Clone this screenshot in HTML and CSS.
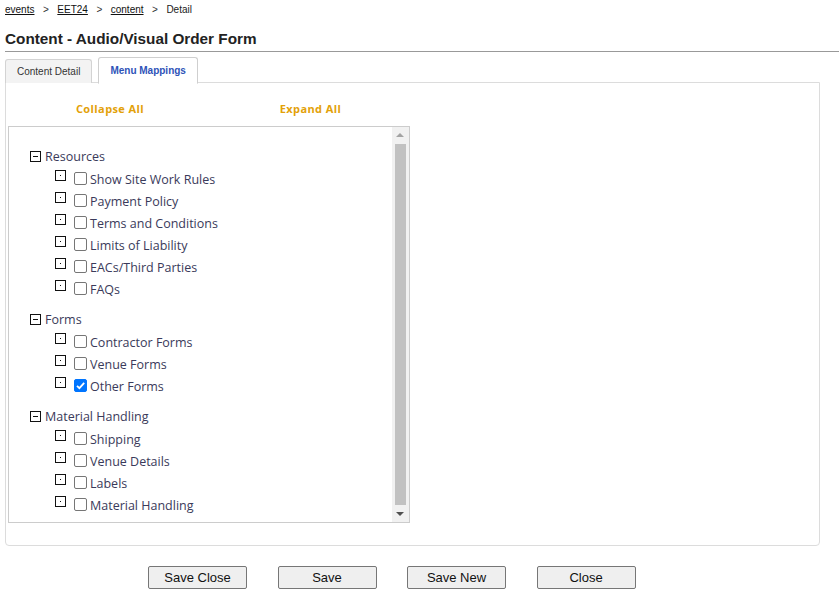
FILE: index.html
```html
<!DOCTYPE html>
<html>
<head>
<meta charset="utf-8">
<title>Content - Audio/Visual Order Form</title>
<link rel="stylesheet" href="styles.css">
</head>
<body>
<div class="crumbs">
  <a href="#">events</a><span class="sep">&gt;</span><a href="#">EET24</a><span class="sep">&gt;</span><a href="#">content</a><span class="sep">&gt;</span><span class="here">Detail</span>
</div>
<h1 class="title">Content - Audio/Visual Order Form</h1>

<div class="tabs">
  <div class="tab">Content Detail</div>
  <div class="tab active">Menu Mappings</div>
</div>

<div class="panel">
  <div class="toggles">
    <a href="#" class="toggle">Collapse All</a>
    <a href="#" class="toggle">Expand All</a>
  </div>
  <div class="treebox">
    <ul class="tree">
      <li class="root">
        <div class="row rootrow"><span class="exp minus"></span><span class="label">Resources</span></div>
        <ul class="kids">
          <li class="row"><span class="exp dot"></span><span class="cb"></span><span class="label">Show Site Work Rules</span></li>
          <li class="row"><span class="exp dot"></span><span class="cb"></span><span class="label">Payment Policy</span></li>
          <li class="row"><span class="exp dot"></span><span class="cb"></span><span class="label">Terms and Conditions</span></li>
          <li class="row"><span class="exp dot"></span><span class="cb"></span><span class="label">Limits of Liability</span></li>
          <li class="row"><span class="exp dot"></span><span class="cb"></span><span class="label">EACs/Third Parties</span></li>
          <li class="row"><span class="exp dot"></span><span class="cb"></span><span class="label">FAQs</span></li>
        </ul>
      </li>
      <li class="root">
        <div class="row rootrow"><span class="exp minus"></span><span class="label">Forms</span></div>
        <ul class="kids">
          <li class="row"><span class="exp dot"></span><span class="cb"></span><span class="label">Contractor Forms</span></li>
          <li class="row"><span class="exp dot"></span><span class="cb"></span><span class="label">Venue Forms</span></li>
          <li class="row"><span class="exp dot"></span><span class="cb on"><svg viewBox="0 0 13 13" width="13" height="13"><path d="M3 6.8 L5.4 9.2 L10.2 3.8" fill="none" stroke="#fff" stroke-width="1.8"/></svg></span><span class="label">Other Forms</span></li>
        </ul>
      </li>
      <li class="root">
        <div class="row rootrow"><span class="exp minus"></span><span class="label">Material Handling</span></div>
        <ul class="kids">
          <li class="row"><span class="exp dot"></span><span class="cb"></span><span class="label">Shipping</span></li>
          <li class="row"><span class="exp dot"></span><span class="cb"></span><span class="label">Venue Details</span></li>
          <li class="row"><span class="exp dot"></span><span class="cb"></span><span class="label">Labels</span></li>
          <li class="row"><span class="exp dot"></span><span class="cb"></span><span class="label">Material Handling</span></li>
        </ul>
      </li>
    </ul>
    <div class="vscroll">
      <div class="arrow up"></div>
      <div class="thumb"></div>
      <div class="arrow down"></div>
    </div>
  </div>
</div>

<div class="actions">
  <button class="btn">Save Close</button>
  <button class="btn">Save</button>
  <button class="btn">Save New</button>
  <button class="btn">Close</button>
</div>
</body>
</html>
```

FILE: styles.css
```css
html, body {
  margin: 0;
  padding: 0;
  background: #fff;
}
body {
  width: 839px;
  height: 593px;
  overflow: hidden;
  font-family: "Liberation Sans", Arial, sans-serif;
  color: #222;
}

/* breadcrumb trail */
.crumbs {
  font-size: 10px;
  line-height: 12px;
  padding: 4px 0 0 5px;
  height: 16px;
  box-sizing: border-box;
}
.crumbs a {
  color: #111;
  text-decoration: underline;
}
.crumbs .sep {
  margin: 0 8.5px;
  color: #333;
}
.crumbs .here {
  color: #222;
}

.title {
  margin: 0 0 0 5px;
  padding: 14px 0 4px 0;
  font-size: 15.3px;
  line-height: 17px;
  font-weight: bold;
  color: #222;
  border-bottom: 1px solid #999;
}

/* tab strip */
.tabs {
  display: flex;
  align-items: flex-end;
  gap: 6px;
  padding: 4px 0 0 5px;
  height: 31px;
  box-sizing: border-box;
  position: relative;
  z-index: 1;
}
.tab {
  height: 24px;
  padding: 0 11px;
  line-height: 23px;
  font-size: 10px;
  color: #333;
  background: #f3f3f3;
  border: 1px solid #d3d3d3;
  border-bottom: none;
  border-radius: 3px 3px 0 0;
  box-sizing: border-box;
}
.tab.active {
  height: 27px;
  line-height: 26px;
  background: #fff;
  color: #2e53b8;
  font-weight: bold;
  padding: 0 11px;
  border-color: #cfcfcf;
  margin-bottom: -1px;
  border-bottom: 1px solid #fff;
}

.panel {
  margin: -1px 0 0 5px;
  width: 815px;
  height: 464px;
  box-sizing: border-box;
  border: 1px solid #dcdcdc;
  border-radius: 0 0 4px 4px;
  padding: 17px 0 0 2px;
}

.toggles {
  display: grid;
  grid-template-columns: 202px 199px;
  height: 26px;
  margin-left: 1px;
}
.toggle {
  text-align: center;
  font-family: "Open Sans", sans-serif;
  font-size: 11px;
  letter-spacing: 0.4px;
  font-weight: bold;
  color: #e3a109;
  text-decoration: none;
  line-height: 17px;
}

/* tree list with its scroll track */
.treebox {
  display: flex;
  width: 402px;
  height: 397px;
  box-sizing: border-box;
  border: 1px solid #cccccc;
}
.tree {
  flex: 1;
  list-style: none;
  margin: 0;
  padding: 17px 0 0 21px;
  font-family: "Open Sans", sans-serif;
  font-size: 12.5px;
  color: #3a3a5a;
}
.tree ul {
  list-style: none;
  margin: 0;
  padding: 0 0 0 25px;
}
.root + .root {
  margin-top: 7px;
}
.row {
  display: flex;
  align-items: center;
  height: 22px;
}
.rootrow {
  height: 24px;
}
.exp {
  width: 11px;
  height: 11px;
  box-sizing: border-box;
  border: 1px solid #111;
  position: relative;
  flex: none;
}
.exp.minus::after {
  content: "";
  position: absolute;
  left: 2px;
  top: 4px;
  width: 5px;
  height: 1px;
  background: #111;
}
.exp.dot {
  margin-top: -7px;
}
.exp.dot::after {
  content: "";
  position: absolute;
  left: 4px;
  top: 4px;
  width: 1px;
  height: 1px;
  background: #111;
}
.rootrow .label {
  margin-left: 4px;
}
.cb {
  width: 13px;
  height: 13px;
  box-sizing: border-box;
  border: 1px solid #767676;
  border-radius: 2px;
  margin: -2px 3px 0 8px;
  flex: none;
  background: #fff;
  display: flex;
}
.cb.on {
  background: #0075ff;
  border-color: #0075ff;
}
.cb.on svg {
  margin: -1px;
}

.vscroll {
  width: 17px;
  background: #f1f1f1;
  display: flex;
  flex-direction: column;
  align-items: center;
}
.arrow {
  height: 17px;
  width: 17px;
  position: relative;
  flex: none;
}
.arrow::after {
  content: "";
  position: absolute;
  left: 4px;
  border-left: 4px solid transparent;
  border-right: 4px solid transparent;
}
.arrow.up::after {
  top: 6px;
  border-bottom: 4px solid #a3a3a3;
}
.arrow.down::after {
  top: 7px;
  border-top: 4px solid #505050;
}
.thumb {
  flex: 1;
  width: 11px;
  background: #c1c1c1;
}

/* form buttons */
.actions {
  display: flex;
  gap: 30.5px;
  padding: 20px 0 0 148px;
}
.btn {
  width: 99px;
  height: 23px;
  padding: 0;
  font-family: "Liberation Sans", Arial, sans-serif;
  font-size: 13px;
  color: #111;
  background: #efefef;
  border: 1px solid #767676;
  border-radius: 2px;
}
```
